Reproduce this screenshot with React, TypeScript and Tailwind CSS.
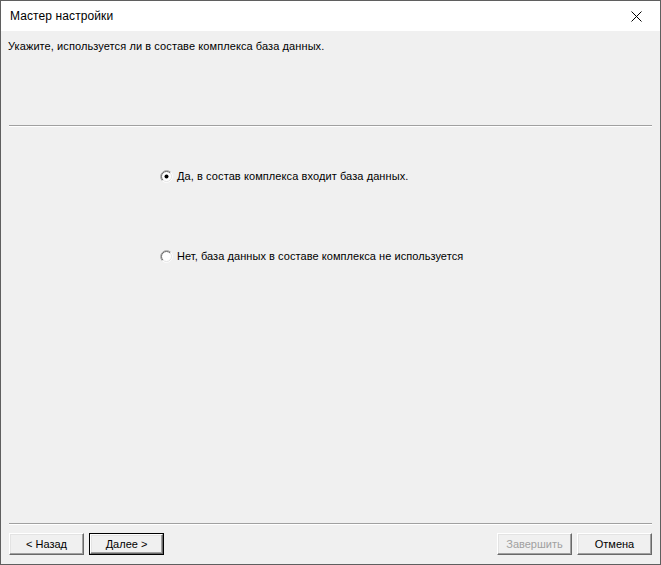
import React from "react";

const ui = { fontFamily: '"Liberation Sans", Arial, sans-serif' };

function Radio({ checked }: { checked?: boolean }) {
  return (
    <svg width="13" height="13" viewBox="0 0 13 13" className="shrink-0">
      <circle cx="6.5" cy="6.5" r="5.5" fill="#ffffff" />
      <path d="M2.26 10.74 A6 6 0 0 1 10.74 2.26" fill="none" stroke="#a0a0a0" strokeWidth="1" />
      <path d="M10.74 2.26 A6 6 0 0 1 2.26 10.74" fill="none" stroke="#ffffff" strokeWidth="1" />
      <path d="M2.96 10.04 A5 5 0 0 1 10.04 2.96" fill="none" stroke="#696969" strokeWidth="1" />
      <path d="M10.04 2.96 A5 5 0 0 1 2.96 10.04" fill="none" stroke="#e3e3e3" strokeWidth="1" />
      {checked && <circle cx="6.5" cy="6.5" r="2" fill="#000000" />}
    </svg>
  );
}

function Btn({
  label,
  isDefault,
  disabled,
}: {
  label: string;
  isDefault?: boolean;
  disabled?: boolean;
}) {
  const inner = (
    <div
      className={
        "flex h-full w-full items-center justify-center border border-t-white border-l-white border-r-[#696969] border-b-[#696969] bg-[#f0f0f0] shadow-[inset_-1px_-1px_#a0a0a0,inset_1px_1px_#e3e3e3] text-[11px] leading-none " +
        (disabled ? "text-[#a0a0a0]" : "text-black")
      }
    >
      {label}
    </div>
  );
  if (isDefault) {
    return <div className="h-[22px] w-[75px] border border-black">{inner}</div>;
  }
  return <div className="h-[22px] w-[75px]">{inner}</div>;
}

export default function App() {
  return (
    <div
      style={ui}
      className="flex h-[565px] w-[661px] flex-col border border-[#5f5f5f] bg-[#f0f0f0] text-black"
    >
      {/* title bar */}
      <div className="flex h-[30px] items-center justify-between bg-white pl-[9px] pr-[18px]">
        <span className="text-[12px] tracking-[0.1px]">Мастер настройки</span>
        <svg width="11" height="11" viewBox="0 0 11 11">
          <path d="M0.5 0.5 L10.5 10.5 M10.5 0.5 L0.5 10.5" stroke="#000" strokeWidth="1" />
        </svg>
      </div>

      <p className="pl-[7px] pt-[8px] text-[11px] leading-[14px] tracking-[0.09px]">
        Укажите, используется ли в составе комплекса база данных.
      </p>

      <div className="mx-[8px] mt-[72px] h-[2px] border-t border-b border-t-[#a0a0a0] border-b-white" />

      <div className="mt-[41px] flex h-[16px] items-center pl-[159px]">
        <Radio checked />
        <span className="ml-[4px] text-[11px] tracking-[0.09px]">Да, в состав комплекса входит база данных.</span>
      </div>
      <div className="mt-[64px] flex h-[16px] items-center pl-[159px]">
        <Radio />
        <span className="ml-[4px] text-[11px] tracking-[0.06px]">Нет, база данных в составе комплекса не используется</span>
      </div>

      <div className="flex-1" />

      <div className="mx-[8px] h-[2px] border-t border-b border-t-[#a0a0a0] border-b-white" />

      <div className="mx-[8px] mb-[9px] mt-[8px] flex items-center">
        <Btn label="< Назад" />
        <div className="ml-[5px]">
          <Btn label="Далее >" isDefault />
        </div>
        <div className="flex-1" />
        <Btn label="Завершить" disabled />
        <div className="ml-[5px]">
          <Btn label="Отмена" />
        </div>
      </div>
    </div>
  );
}
